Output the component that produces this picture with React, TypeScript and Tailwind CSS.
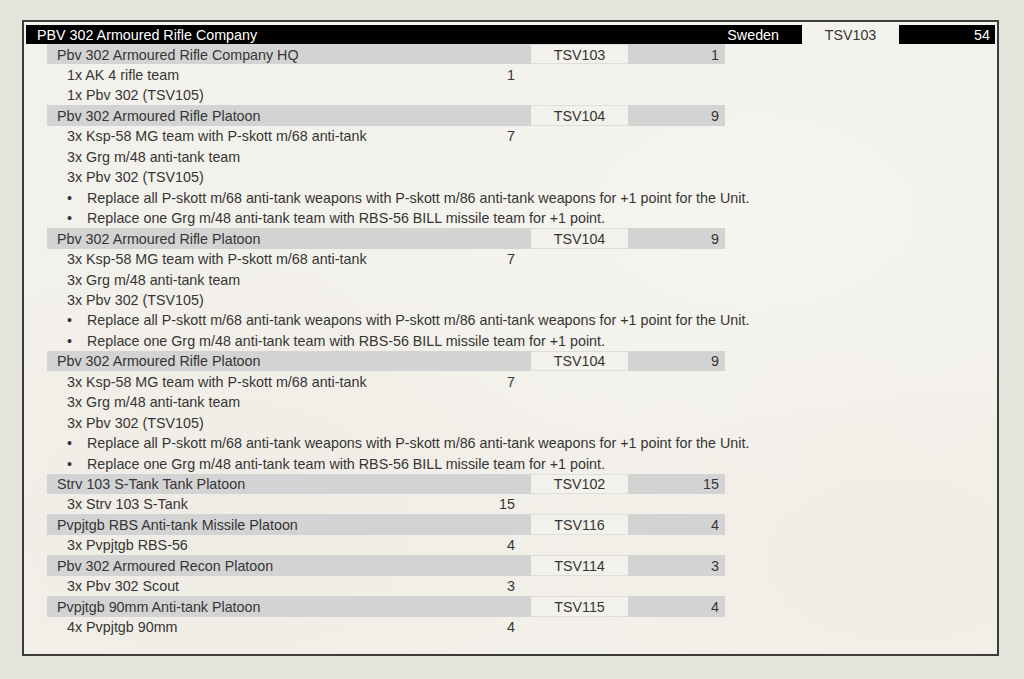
const units = [
  {
    name: "Pbv 302 Armoured Rifle Company HQ",
    code: "TSV103",
    points: "1",
    items: [
      { text: "1x AK 4 rifle team", points: "1" },
      { text: "1x Pbv 302 (TSV105)" },
    ],
    options: [] as string[],
  },
  ...[1, 2, 3].map(() => ({
    name: "Pbv 302 Armoured Rifle Platoon",
    code: "TSV104",
    points: "9",
    items: [
      { text: "3x Ksp-58 MG team with P-skott m/68 anti-tank", points: "7" },
      { text: "3x Grg m/48 anti-tank team" },
      { text: "3x Pbv 302 (TSV105)" },
    ],
    options: [
      "Replace all P-skott m/68 anti-tank weapons with P-skott m/86 anti-tank weapons for +1 point for the Unit.",
      "Replace one Grg m/48 anti-tank team with RBS-56 BILL missile team for +1 point.",
    ],
  })),
  {
    name: "Strv 103 S-Tank Tank Platoon",
    code: "TSV102",
    points: "15",
    items: [{ text: "3x Strv 103 S-Tank", points: "15" }],
    options: [],
  },
  {
    name: "Pvpjtgb RBS Anti-tank Missile Platoon",
    code: "TSV116",
    points: "4",
    items: [{ text: "3x Pvpjtgb RBS-56", points: "4" }],
    options: [],
  },
  {
    name: "Pbv 302 Armoured Recon Platoon",
    code: "TSV114",
    points: "3",
    items: [{ text: "3x Pbv 302 Scout", points: "3" }],
    options: [],
  },
  {
    name: "Pvpjtgb 90mm Anti-tank Platoon",
    code: "TSV115",
    points: "4",
    items: [{ text: "4x Pvpjtgb 90mm", points: "4" }],
    options: [],
  },
];

export default function App() {
  return (
    <div
      className="min-h-screen bg-[#e5e4da] pt-[20px] pl-[22px] text-[14.3px] text-[#353535]"
      style={{ fontFamily: '"Liberation Sans", Arial, sans-serif' }}
    >
      <div className="w-[977px] h-[636px] border-2 border-[#3c3c3c] bg-[#f3f1eb] bg-[radial-gradient(ellipse_at_75%_30%,#f6f4ef_0%,transparent_45%),radial-gradient(ellipse_at_20%_80%,#efece4_0%,transparent_40%),radial-gradient(ellipse_at_90%_85%,#f0ede5_0%,transparent_35%)] pt-[3px] px-[2px]">
        <div className="flex items-center h-[19px] pt-[2px] bg-black text-white">
          <div className="flex-1 pl-[11px]">PBV 302 Armoured Rifle Company</div>
          <div className="mr-[23px]">Sweden</div>
          <div className="w-[97px] h-[19px] -mt-[2px] pt-[2px] flex items-center justify-center bg-[#f4f2ec] text-[#353535]">
            TSV103
          </div>
          <div className="w-[96px] text-right pr-[5px]">54</div>
        </div>

        <div className="ml-[21px]">
          {units.map((unit, i) => (
            <div key={i}>
              <div className="flex h-[20.46px] items-center">
                <div className="w-[484px] h-full flex items-center pt-[2px] bg-[#d3d3d3] pl-[10px]">
                  {unit.name}
                </div>
                <div className="w-[97px] h-full flex items-center justify-center pt-[2px] bg-[#f3f1eb] border-y border-[#e0ded8]">
                  {unit.code}
                </div>
                <div className="w-[97px] h-full flex items-center justify-end pt-[2px] bg-[#d3d3d3] pr-[6px]">
                  {unit.points}
                </div>
              </div>
              {unit.items.map((item, j) => (
                <div key={j} className="flex w-[468px] h-[20.46px] items-center pt-[2px] pl-[20px]">
                  <span className="flex-1">{item.text}</span>
                  <span>{item.points}</span>
                </div>
              ))}
              {unit.options.map((opt, k) => (
                <div key={k} className="flex h-[20.46px] items-center pt-[2px] pl-[20px]">
                  <span className="w-[20px]">•</span>
                  <span>{opt}</span>
                </div>
              ))}
            </div>
          ))}
        </div>
      </div>
    </div>
  );
}
